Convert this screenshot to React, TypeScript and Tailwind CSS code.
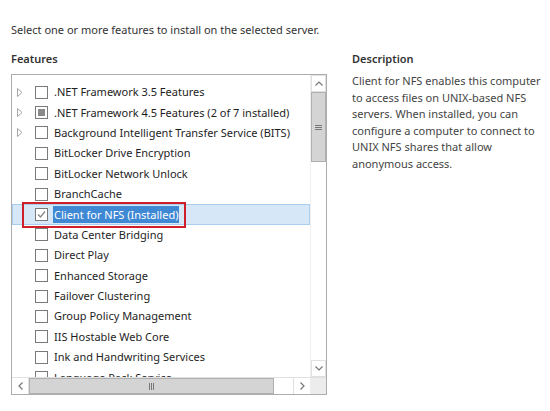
import React from "react";

type Item = { label: string; expand?: boolean; state?: "none" | "partial" | "checked"; selected?: boolean };

const items: Item[] = [
  { label: ".NET Framework 3.5 Features", expand: true },
  { label: ".NET Framework 4.5 Features (2 of 7 installed)", expand: true, state: "partial" },
  { label: "Background Intelligent Transfer Service (BITS)", expand: true },
  { label: "BitLocker Drive Encryption" },
  { label: "BitLocker Network Unlock" },
  { label: "BranchCache" },
  { label: "Client for NFS (Installed)", state: "checked", selected: true },
  { label: "Data Center Bridging" },
  { label: "Direct Play" },
  { label: "Enhanced Storage" },
  { label: "Failover Clustering" },
  { label: "Group Policy Management" },
  { label: "IIS Hostable Web Core" },
  { label: "Ink and Handwriting Services" },
  { label: "Language Pack Service" },
];

function Check({ state }: { state?: Item["state"] }) {
  return (
    <div className="w-[13px] h-[13px] border border-[#7a7a7a] bg-white flex items-center justify-center shrink-0">
      {state === "partial" && <div className="w-[7px] h-[7px] bg-[#8a8a8a]" />}
      {state === "checked" && (
        <svg width="11" height="11" viewBox="0 0 11 11">
          <path d="M2 5.5 L4.5 8 L9 2.5" fill="none" stroke="#8a8a8a" strokeWidth="1.4" />
        </svg>
      )}
    </div>
  );
}

export default function App() {
  return (
    <div
      className="w-[550px] h-[411px] bg-white overflow-hidden text-[11px] text-[#1e1e1e]"
      style={{ fontFamily: '"Noto Sans", "Open Sans", sans-serif' }}
    >
      <div className="pt-[21px] pl-[11px] text-[#333] leading-[18px]">
        Select one or more features to install on the selected server.
      </div>
      <div className="flex mt-[11px]">
        <div className="w-[316px] ml-[11px]">
          <div className="font-semibold text-[#333] leading-[18px] h-[20px]">Features</div>
          <div className="mt-[4px] w-[316px] h-[321px] border border-[#acacac] flex flex-col">
            <div className="flex flex-1 min-h-0">
              <div className="flex-1 min-w-0 overflow-hidden pt-[7px]">
                {items.map((it) => (
                  <div key={it.label} className="h-[20.4px] flex items-center relative">
                    {it.selected && (
                      <div className="absolute inset-0 bg-[#d6e8f8] border border-[#a9cdef]" />
                    )}
                    <div className="relative w-[23px] flex justify-start pl-[5px]">
                      {it.expand && (
                        <svg width="6" height="9" viewBox="0 0 6 9">
                          <path d="M0.5 0.5 L5 4.5 L0.5 8.5 Z" fill="none" stroke="#a6a6a6" strokeWidth="1" />
                        </svg>
                      )}
                    </div>
                    <div className="relative">
                      <Check state={it.state} />
                    </div>
                    <div className="relative ml-[5px] whitespace-nowrap leading-[16px]">
                      {it.selected ? (
                        <span className="bg-[#3f88d4] text-white px-[1px] py-[1px]">{it.label}</span>
                      ) : (
                        <span className="px-[1px]">{it.label}</span>
                      )}
                    </div>
                    {it.selected && (
                      <div className="absolute left-[10px] top-[-2px] w-[164px] h-[26px] border-2 border-[#d01f2a]" />
                    )}
                  </div>
                ))}
              </div>
              <div className="w-[16px] bg-[#e8e8e8] border-l border-[#f0f0f0] flex flex-col">
                <div className="h-[17px] bg-white flex items-center justify-center border border-[#e0e0e0]">
                  <svg width="8" height="5" viewBox="0 0 8 5">
                    <path d="M0.5 4.5 L4 1 L7.5 4.5" fill="none" stroke="#777" strokeWidth="1.2" />
                  </svg>
                </div>
                <div className="h-[70px] bg-[#d4d4d4] border border-[#b0b0b0] flex items-center justify-center">
                  <div className="flex flex-col gap-[1px]">
                    <div className="w-[7px] h-[1px] bg-[#777]" />
                    <div className="w-[7px] h-[1px] bg-[#777]" />
                    <div className="w-[7px] h-[1px] bg-[#777]" />
                  </div>
                </div>
                <div className="flex-1 bg-white" />
                <div className="h-[17px] bg-white flex items-center justify-center border border-[#e0e0e0]">
                  <svg width="8" height="5" viewBox="0 0 8 5">
                    <path d="M0.5 0.5 L4 4 L7.5 0.5" fill="none" stroke="#777" strokeWidth="1.2" />
                  </svg>
                </div>
              </div>
            </div>
            <div className="h-[17px] flex border-t border-[#e0e0e0]">
              <div className="w-[17px] bg-white flex items-center justify-center border-r border-[#e0e0e0]">
                <svg width="5" height="8" viewBox="0 0 5 8">
                  <path d="M4.5 0.5 L1 4 L4.5 7.5" fill="none" stroke="#777" strokeWidth="1.2" />
                </svg>
              </div>
              <div className="w-[245px] bg-[#d4d4d4] border border-[#b0b0b0] flex items-center justify-center">
                <div className="flex gap-[1px]">
                  <div className="w-[1px] h-[7px] bg-[#777]" />
                  <div className="w-[1px] h-[7px] bg-[#777]" />
                  <div className="w-[1px] h-[7px] bg-[#777]" />
                </div>
              </div>
              <div className="flex-1 bg-white" />
              <div className="w-[17px] bg-white flex items-center justify-center border-l border-[#e0e0e0]">
                <svg width="5" height="8" viewBox="0 0 5 8">
                  <path d="M0.5 0.5 L4 4 L0.5 7.5" fill="none" stroke="#777" strokeWidth="1.2" />
                </svg>
              </div>
              <div className="w-[16px] bg-[#ececec]" />
            </div>
          </div>
        </div>
        <div className="ml-[25px] w-[194px]">
          <div className="font-semibold text-[#333] leading-[18px] h-[20px]">Description</div>
          <div className="mt-[3px] text-[#444] leading-[16.6px]">
            Client for NFS enables this computer to access files on UNIX-based NFS servers. When installed, you can configure a computer to connect to UNIX NFS shares that allow anonymous access.
          </div>
        </div>
      </div>
    </div>
  );
}
